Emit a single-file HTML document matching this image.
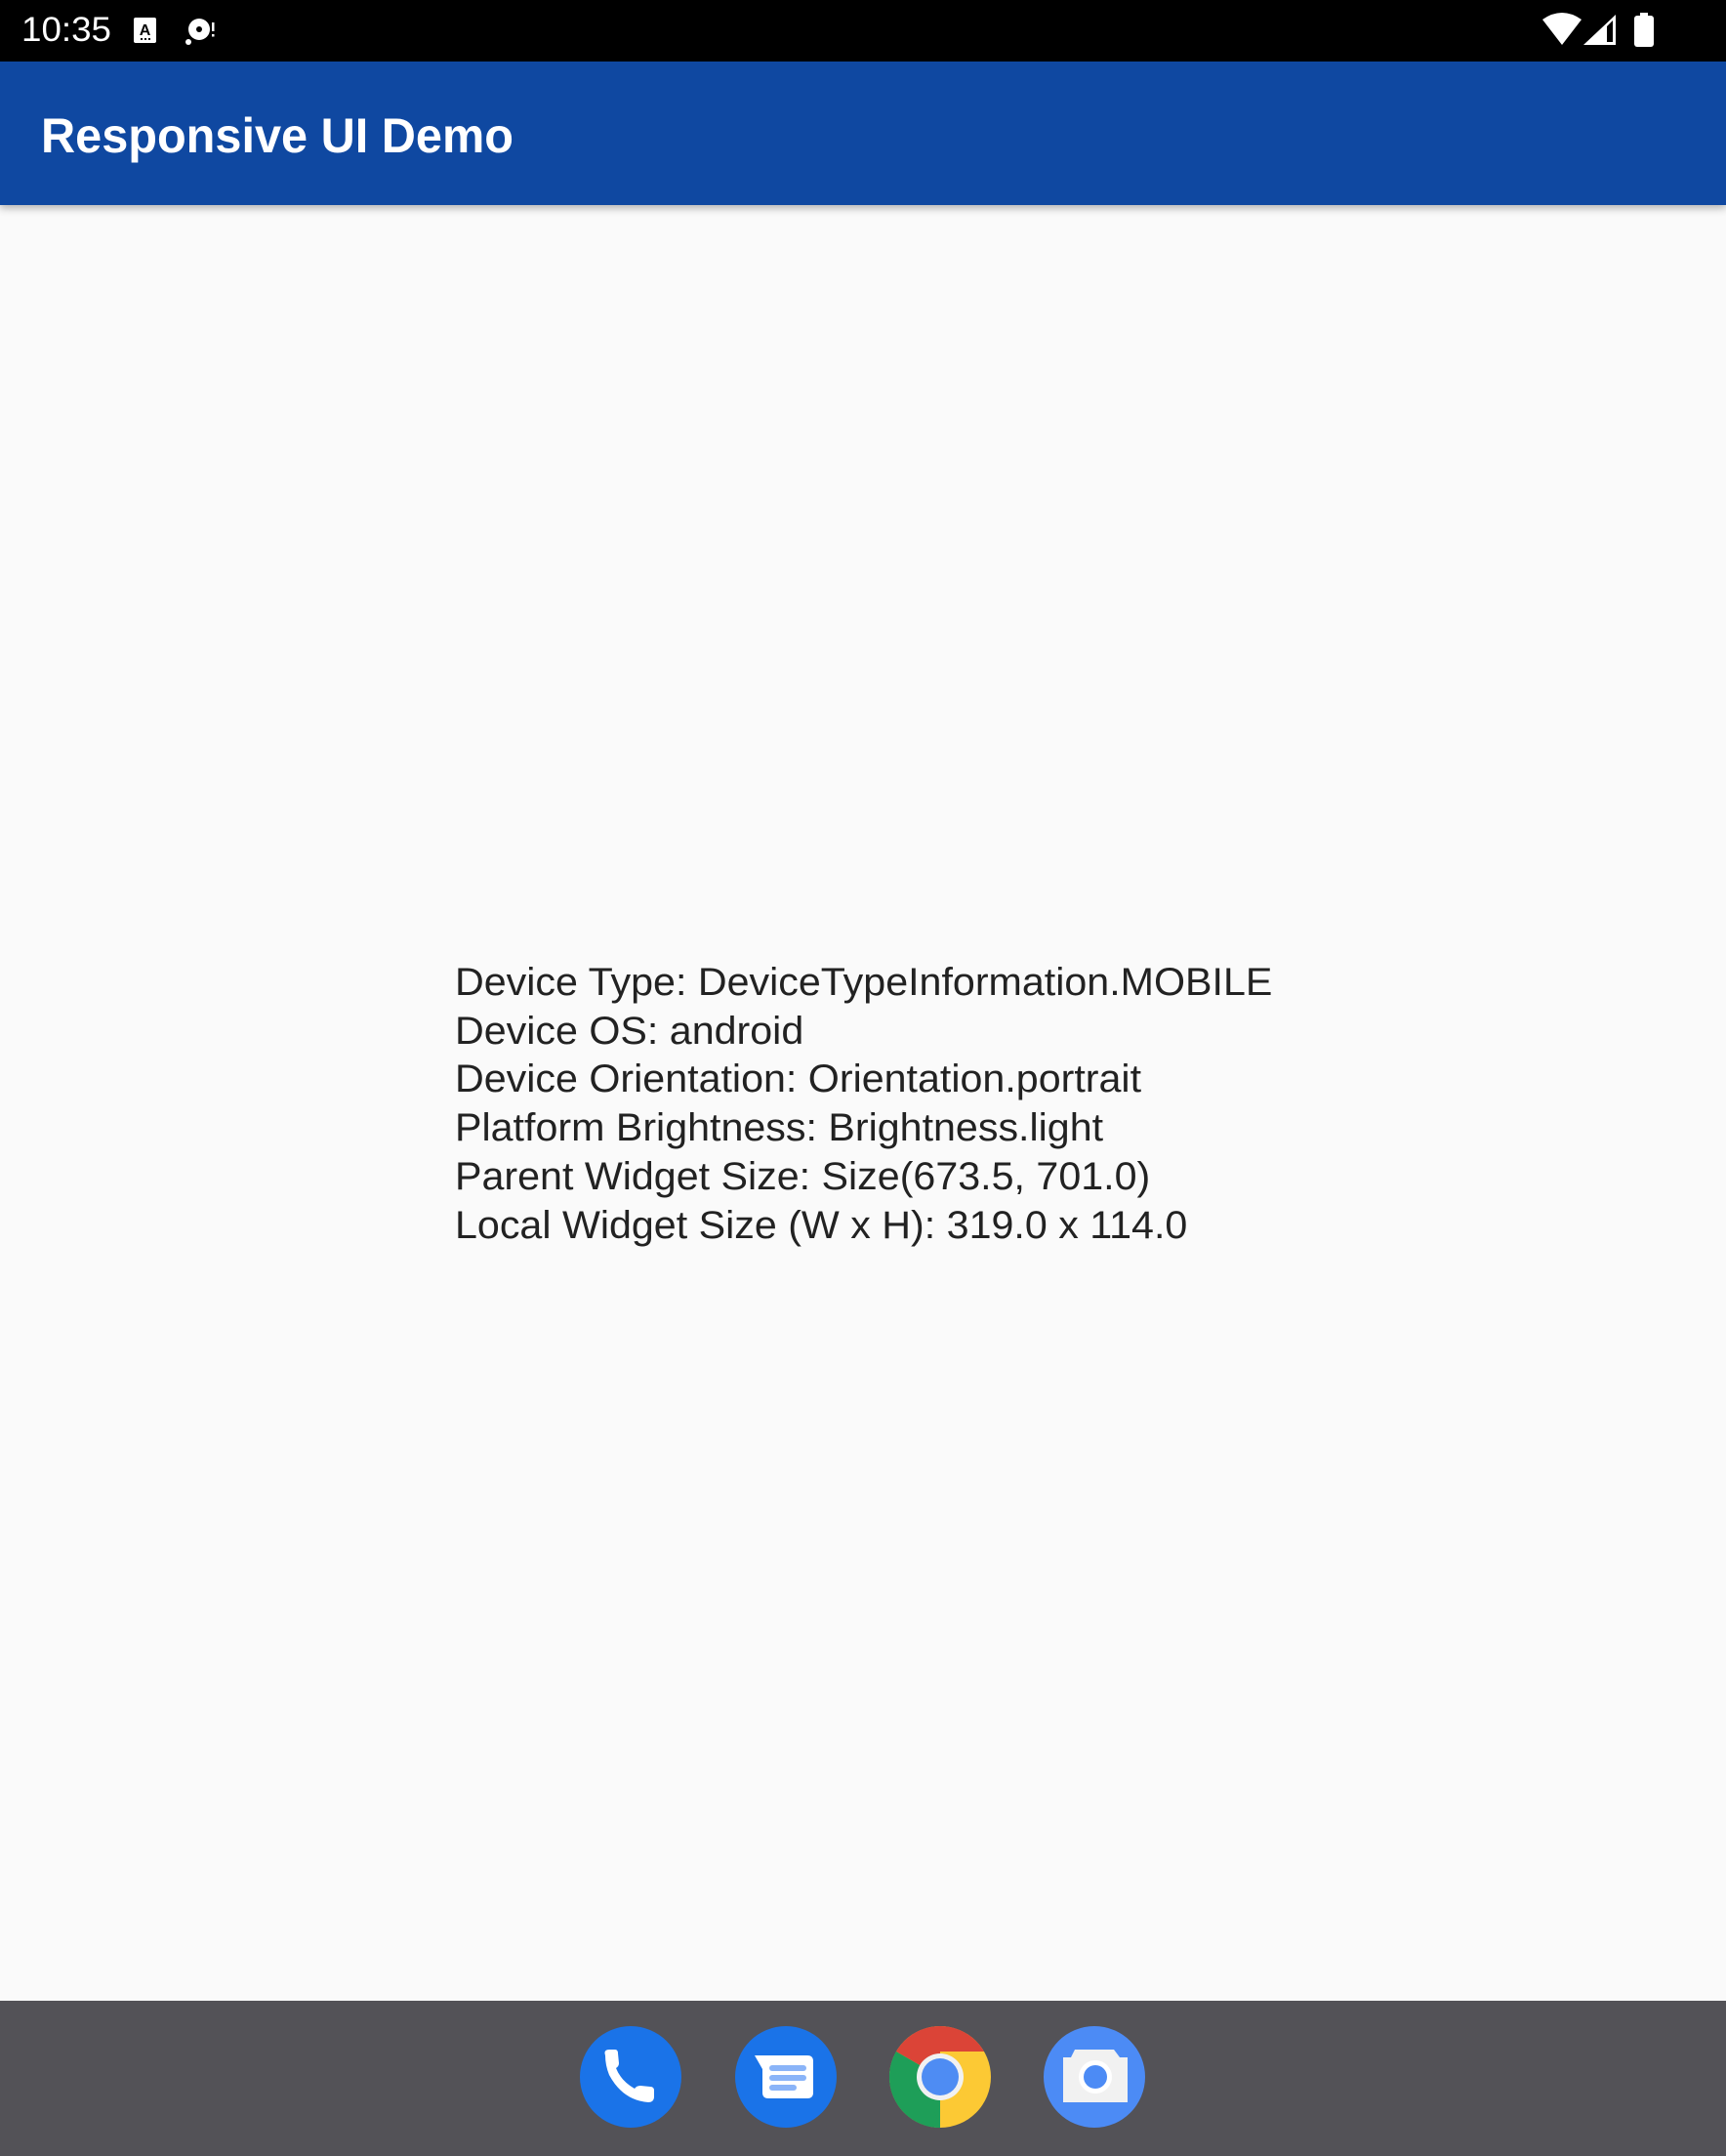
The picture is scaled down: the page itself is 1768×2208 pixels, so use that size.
<!DOCTYPE html>
<html><head><meta charset="utf-8">
<style>
html,body{margin:0;padding:0}
body{width:1768px;height:2208px;position:relative;overflow:hidden;background:#fafafa;font-family:"Liberation Sans",sans-serif}
#status{position:absolute;left:0;top:0;width:1768px;height:63px;background:#000}
#time{position:absolute;left:22px;top:11px;color:#fff;font-size:35px;line-height:40px;transform:scaleX(1.05);transform-origin:left}
#appbar{position:absolute;left:0;top:63px;width:1768px;height:147px;background:#0f48a1;box-shadow:0 3px 8px rgba(0,0,0,0.3)}
#title{position:absolute;left:42px;top:48px;color:#fff;font-size:50px;font-weight:bold;line-height:56px;transform:scaleX(0.973);transform-origin:left}
#info{position:absolute;left:466px;top:982px;color:#222;font-size:40px;line-height:49.7px;white-space:pre;transform:scaleX(1.03);transform-origin:left}
#dock{position:absolute;left:0;top:2049px;width:1768px;height:159px;background:#535257}
.ic{position:absolute;top:2075px;width:104px;height:104px}
</style></head><body>
<div id="status">
<div id="time">10:35</div>
<svg style="position:absolute;left:130px;top:12px" width="100" height="40" viewBox="0 0 100 40">
<rect x="7" y="6" width="23" height="26" rx="2" fill="#fff"/>
<text x="18.5" y="24" font-size="16" font-weight="bold" text-anchor="middle" fill="#000" font-family="Liberation Sans">A</text>
<rect x="14" y="27" width="2" height="2" fill="#000"/><rect x="18" y="27" width="2" height="2" fill="#000"/><rect x="22" y="27" width="2" height="2" fill="#000"/>
<circle cx="74" cy="18" r="11" fill="#fff"/><circle cx="74" cy="18" r="3" fill="#000"/>
<circle cx="63" cy="31" r="3" fill="#fff"/>
<rect x="87" y="11" width="2.5" height="9" fill="#fff"/><rect x="87" y="23" width="2.5" height="2.5" fill="#fff"/>
</svg>
<svg style="position:absolute;left:1576px;top:10px" width="130" height="44" viewBox="0 0 130 44">
<path d="M4 10 Q24 -4 44 10 L24 36 Z" fill="#fff"/>
<path d="M46 36 L79 5 L79 36 Z" fill="#fff"/>
<path d="M70 17 L70 33 L76 33 L76 11 Z" fill="#000"/>
<rect x="98" y="6" width="20" height="32" rx="3" fill="#fff"/>
<rect x="104" y="3" width="8" height="4" fill="#fff"/>
</svg>
</div>
<div id="appbar"><div id="title">Responsive UI Demo</div></div>
<div id="info">Device Type: DeviceTypeInformation.MOBILE
Device OS: android
Device Orientation: Orientation.portrait
Platform Brightness: Brightness.light
Parent Widget Size: Size(673.5, 701.0)
Local Widget Size (W x H): 319.0 x 114.0</div>
<div id="dock"></div>
<svg class="ic" style="left:594px" viewBox="0 0 104 104">
<circle cx="52" cy="52" r="52" fill="#1a73e8"/>
<path d="M26 30 Q24 24 30 24 L36 24 Q39 24 39 28 L40 38 Q40 41 37 43 Q42 56 56 64 Q58 61 62 61 L72 62 Q76 62 76 66 L76 72 Q76 78 70 78 Q44 76 30 50 Q26 40 26 30Z" fill="#fff"/>
</svg>
<svg class="ic" style="left:753px" viewBox="0 0 104 104">
<circle cx="52" cy="52" r="52" fill="#1a73e8"/>
<path d="M20 30 L74 30 Q80 30 80 36 L80 68 Q80 74 74 74 L34 74 Q28 74 28 68 L28 44 Z" fill="#fff"/>
<rect x="35" y="40" width="38" height="6" rx="3" fill="#8ab4f8"/>
<rect x="35" y="50" width="38" height="6" rx="3" fill="#8ab4f8"/>
<rect x="35" y="60" width="28" height="6" rx="3" fill="#8ab4f8"/>
</svg>
<svg class="ic" style="left:911px" viewBox="0 0 104 104">
<circle cx="52" cy="52" r="52" fill="#fcc934"/>
<path d="M52 0 A52 52 0 0 1 97 26 L52 26 L52 52 L7 26 A52 52 0 0 1 52 0Z" fill="#db4437"/>
<path d="M7 26 A52 52 0 0 0 52 104 L52 52 Z" fill="#1e9e58"/>
<path d="M52 52 L52 104 L78 52 Z" fill="#fcc934"/>
<path d="M7 26 L40 70 L52 104 A52 52 0 0 1 7 26Z" fill="#1e9e58"/>
<circle cx="52" cy="52" r="24" fill="#f1f1f1"/>
<circle cx="52" cy="52" r="19" fill="#4e8cf3"/>
</svg>
<svg class="ic" style="left:1069px" viewBox="0 0 104 104">
<circle cx="52" cy="52" r="52" fill="#4c8bf5"/>
<path d="M32 24 L72 24 L78 32 L86 32 L86 78 L20 78 L20 32 L28 32 Z" fill="#f1f1f1"/>
<circle cx="53" cy="52" r="17" fill="#fff"/>
<circle cx="53" cy="52" r="12" fill="#4c8bf5"/>
</svg>
</body></html>
